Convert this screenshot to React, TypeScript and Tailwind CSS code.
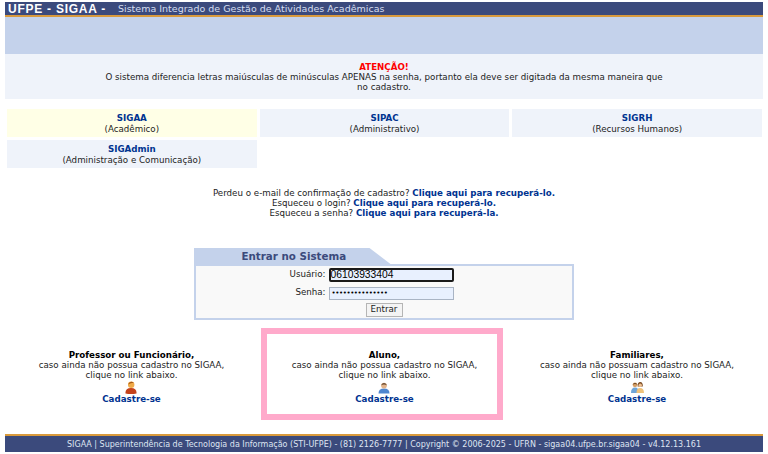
const FONT = "font-['DejaVu_Sans',Verdana,sans-serif]";

function Tab({ title, sub, active }: { title: string; sub: string; active?: boolean }) {
  return (
    <div className={`h-[28px] pt-[2px] flex flex-col items-center justify-center text-[8.7px] leading-[11px] ${active ? "bg-[#ffffe6]" : "bg-[#eff3fa]"}`}>
      <a className="font-bold text-[#003390]">{title}</a>
      <span className="text-[#222222]">{sub}</span>
    </div>
  );
}

function PersonIcon({ kind }: { kind: "orange" | "blue" | "family" }) {
  if (kind === "family") {
    return (
      <svg width="13" height="11" viewBox="0 0 13 11">
        <path d="M0 11 Q0 5.5 4 5.5 Q8 5.5 8 11 Z" fill="#6fa5d8" />
        <circle cx="4" cy="2.8" r="2.4" fill="#d9a066" />
        <path d="M1.6 2.6 Q4 -0.6 6.4 2.6 Q4 1.6 1.6 2.6 Z" fill="#5a3d20" />
        <path d="M5.5 11 Q5.5 6 9 6 Q13 6 13 11 Z" fill="#efc27a" />
        <path d="M6.6 4.6 Q6.4 0 9.2 0 Q12 0 11.8 4.6 Z" fill="#7a4a22" />
        <circle cx="9.2" cy="3.2" r="1.7" fill="#eebf90" />
      </svg>
    );
  }
  if (kind === "blue") {
    return (
      <svg width="12" height="12" viewBox="0 0 12 12">
        <path d="M0.5 11.5 Q0.5 6.5 6 6.5 Q11.5 6.5 11.5 11.5 Z" fill="#4f86cf" />
        <circle cx="6" cy="3.6" r="2.9" fill="#e2b48c" />
        <path d="M3 3.2 Q6 -1 9 3.2 Q6 1.8 3 3.2 Z" fill="#6a4a30" />
      </svg>
    );
  }
  return (
    <svg width="12" height="13" viewBox="0 0 12 13">
      <path d="M0.5 12.5 Q0 7 6 7 Q12 7 11.5 12.5 Q6 13.5 0.5 12.5 Z" fill="#c4421a" />
      <circle cx="6.2" cy="3.8" r="3.2" fill="#f0aa48" />
      <path d="M3 3.6 Q5 -0.8 9 1.8 Q6 1.6 3 3.6 Z" fill="#a85a16" />
    </svg>
  );
}

function SignupBody({ title, line, kind }: { title: string; line: string; kind: "orange" | "blue" | "family" }) {
  return (
    <div className="flex flex-col items-center text-[8.7px] leading-[10px] text-[#222222] text-center">
      <strong className="text-black">{title}</strong>
      <span>{line}</span>
      <span>clique no link abaixo.</span>
      <span className="h-[13px] mt-[1px] flex items-center justify-center"><PersonIcon kind={kind} /></span>
      <a className="font-bold text-[#003390] leading-[11px]">Cadastre-se</a>
    </div>
  );
}

export default function App() {
  return (
    <div className={`${FONT} bg-white w-[768px] h-[454px] overflow-hidden flex flex-col px-[5px]`}>
      <div className="mt-[2px] h-[13px] bg-[#3b4a7c] border-b-[2px] border-[#d99a3c] box-content flex items-center text-white pl-[3px]">
        <span className="font-['Liberation_Sans',Arial,sans-serif] font-bold text-[12px] tracking-[0.75px] w-[108px]">UFPE - SIGAA -</span>
        <span className="text-[9.5px] text-[#d5def0] pl-[2px] pt-[1px]">Sistema Integrado de Gestão de Atividades Acadêmicas</span>
      </div>

      <div className="h-[37px] bg-[#c4d2eb]" />

      <div className="h-[45px] pt-[1px] bg-[#eff3fa] flex flex-col items-center justify-center text-[8.7px] leading-[10px] text-[#222222] text-center">
        <strong className="text-[#ff0000]">ATENÇÃO!</strong>
        <span className="w-[570px]">O sistema diferencia letras maiúsculas de minúsculas APENAS na senha, portanto ela deve ser digitada da mesma maneira que no cadastro.</span>
      </div>

      <div className="mt-[10px] ml-[2px] w-[755px] grid grid-cols-3 gap-x-[3px] gap-y-[3px]">
        <Tab title="SIGAA" sub="(Acadêmico)" active />
        <Tab title="SIPAC" sub="(Administrativo)" />
        <Tab title="SIGRH" sub="(Recursos Humanos)" />
        <Tab title="SIGAdmin" sub="(Administração e Comunicação)" />
      </div>

      <div className="mt-[20px] flex flex-col items-center text-[8.7px] leading-[10px] text-[#222222]">
        <span>Perdeu o e-mail de confirmação de cadastro? <a className="font-bold text-[#003390]">Clique aqui para recuperá-lo.</a></span>
        <span>Esqueceu o login? <a className="font-bold text-[#003390]">Clique aqui para recuperá-lo.</a></span>
        <span>Esqueceu a senha? <a className="font-bold text-[#003390]">Clique aqui para recuperá-la.</a></span>
      </div>

      <div className="mt-[30px] self-center w-[380px] ml-[-1px]">
        <div className="h-[16px] pt-[1px] w-[197px] bg-[#c4d2eb] [clip-path:polygon(0_0,176px_0,197px_100%,0_100%)] flex items-center pl-[48px] text-[10.3px] font-bold text-[#3b4a7c]">
          Entrar no Sistema
        </div>
        <div className="h-[56px] bg-[#f9f9f9] border-[2px] border-[#c4d2eb] flex flex-col items-center text-[8.7px] text-[#222222]">
          <div className="mt-[1px] h-[16px] flex items-center w-full">
            <span className="w-[133px] text-right pr-[3px]">Usuário:</span>
            <span className="w-[125px] h-[14px] bg-[#e8f0fe] border-[2px] border-[#1a1a1a] rounded-[2px] text-[10.3px] leading-[10px] font-['Liberation_Sans',Arial,sans-serif] text-black flex items-center">06103933404</span>
          </div>
          <div className="mt-[2px] h-[16px] flex items-center w-full">
            <span className="w-[133px] text-right pr-[3px]">Senha:</span>
            <span className="w-[125px] h-[13px] bg-[#e8f0fe] border border-[#a9b4c4] text-[7px] leading-[10px] tracking-[-0.4px] text-black flex items-center pl-[2px]">•••••••••••••••</span>
          </div>
          <div className="mt-[2px] ml-[1px] h-[14px] w-[37px] bg-[#f4f4f4] border border-[#b5b5b5] flex items-center justify-center text-[8.7px] text-[#222222]">Entrar</div>
        </div>
      </div>

      <div className="mt-[8px] flex items-center">
        <div className="w-[251px] shrink-0 ml-[1px] flex justify-center pt-[7px]">
          <SignupBody title="Professor ou Funcionário," line="caso ainda não possua cadastro no SIGAA," kind="orange" />
        </div>
        <div className="ml-[4px] shrink-0 w-[242px] h-[92px] border-[6px] border-[#ffaacb] flex items-center justify-center pl-[5px] pt-[7px]">
          <SignupBody title="Aluno," line="caso ainda não possua cadastro no SIGAA," kind="blue" />
        </div>
        <div className="w-[260px] shrink-0 flex justify-center pl-[8px] pt-[7px]">
          <SignupBody title="Familiares," line="caso ainda não possuam cadastro no SIGAA," kind="family" />
        </div>
      </div>

      <div className="mt-[14px] h-[14px] pt-[2px] bg-[#3b4a7c] border-t-[2px] border-[#d99a3c] box-content flex items-center justify-center text-[8px] text-[#dfe5f2]">
        SIGAA | Superintendência de Tecnologia da Informação (STI-UFPE) - (81) 2126-7777 | Copyright © 2006-2025 - UFRN - sigaa04.ufpe.br.sigaa04 - v4.12.13.161
      </div>
    </div>
  );
}
